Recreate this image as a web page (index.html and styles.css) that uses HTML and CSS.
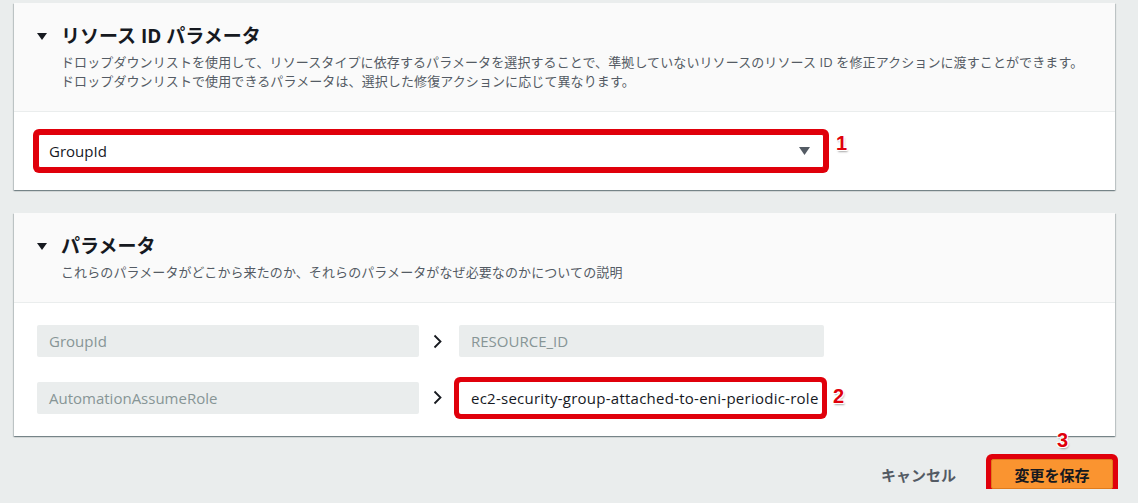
FILE: index.html
```html
<!DOCTYPE html>
<html lang="ja">
<head>
    <meta charset="UTF-8">
    <meta name="viewport" content="width=device-width, initial-scale=1.0">
    <title>修正アクション</title>
    <link rel="stylesheet" href="styles.css">
</head>
<body>
    <div class="page">
        <section class="card">
            <div class="card_head">
                <h2 class="card_title">
                    <svg class="toggle" width="10" height="7" viewBox="0 0 10 7"><path d="M0 0H10L5 7Z" fill="#16191f"/></svg>
                    リソース ID パラメータ
                </h2>
                <p class="card_desc">ドロップダウンリストを使用して、リソースタイプに依存するパラメータを選択することで、準拠していないリソースのリソース ID を修正アクションに渡すことができます。<br>ドロップダウンリストで使用できるパラメータは、選択した修復アクションに応じて異なります。</p>
            </div>
            <div class="card_body">
                <div class="mark_wrap">
                    <div class="select marked">
                        <span>GroupId</span>
                        <svg width="11" height="8" viewBox="0 0 11 8"><path d="M0 0H11L5.5 8Z" fill="#545b64"/></svg>
                    </div>
                    <span class="step step_1">1</span>
                </div>
            </div>
        </section>

        <section class="card">
            <div class="card_head">
                <h2 class="card_title">
                    <svg class="toggle" width="10" height="7" viewBox="0 0 10 7"><path d="M0 0H10L5 7Z" fill="#16191f"/></svg>
                    パラメータ
                </h2>
                <p class="card_desc">これらのパラメータがどこから来たのか、それらのパラメータがなぜ必要なのかについての説明</p>
            </div>
            <div class="card_body params">
                <div class="param_row">
                    <div class="box readonly">GroupId</div>
                    <svg class="arrow" width="9" height="15" viewBox="0 0 9 15"><path d="M1.5 1.5L7.5 7.5L1.5 13.5" fill="none" stroke="#16191f" stroke-width="1.8"/></svg>
                    <div class="box readonly">RESOURCE_ID</div>
                </div>
                <div class="param_row">
                    <div class="box readonly">AutomationAssumeRole</div>
                    <svg class="arrow" width="9" height="15" viewBox="0 0 9 15"><path d="M1.5 1.5L7.5 7.5L1.5 13.5" fill="none" stroke="#16191f" stroke-width="1.8"/></svg>
                    <div class="mark_wrap">
                        <div class="box input marked">ec2-security-group-attached-to-eni-periodic-role</div>
                        <span class="step step_2">2</span>
                    </div>
                </div>
            </div>
        </section>

        <div class="actions">
            <button class="btn_cancel">キャンセル</button>
            <div class="mark_wrap">
                <button class="btn_save marked">変更を保存</button>
                <span class="step step_3">3</span>
            </div>
        </div>
    </div>
</body>
</html>
```

FILE: styles.css
```css
* {margin: 0; padding: 0; box-sizing: border-box;}

body
{
    background: #eaeded;
    font-family: "Open Sans", "Noto Sans CJK JP", sans-serif;
    color: #16191f;
}

.page
{
    padding: 3px 23px 0 14px;
}

.card
{
    background: #fff;
    box-shadow: 0 1px 1px 0 rgba(0, 28, 36, .3), 1px 1px 1px 0 rgba(0, 28, 36, .15), -1px 1px 1px 0 rgba(0, 28, 36, .15);
    margin-bottom: 23px;
}

.card_head
{
    background: #fafafa;
    border-bottom: 1px solid #eaeded;
    padding: 21px 23px 20px;
}

.card_title
{
    display: flex;
    align-items: center;
    font-size: 19px;
    line-height: 24px;
    font-weight: 700;
}

.card_title .toggle
{
    margin-right: 14px;
}

.card_desc
{
    margin-top: 5px;
    padding-left: 24px;
    font-size: 13px;
    line-height: 19px;
    letter-spacing: .1px;
    color: #545b64;
}

.card_body
{
    padding: 22px 23px;
}

/* red highlight frames */
.marked
{
    box-shadow: 0 0 0 5px #e0000b;
    border-radius: 2px;
}

.mark_wrap
{
    position: relative;
    display: inline-block;
}

.step
{
    position: absolute;
    color: #e0000b;
    font-family: "Liberation Sans", sans-serif;
    font-weight: 700;
    font-size: 20px;
    line-height: 20px;
    text-shadow: 1px 1px 0 #fff, -1px -1px 0 #fff, 1px -1px 0 #fff, -1px 1px 0 #fff, 1px 2px 2px rgba(0, 0, 0, .35);
}

.step_1 { right: -23px; top: -1px; }
.step_2 { right: -22px; top: 5px; }
.step_3 { left: 66px; top: -29px; }

.select
{
    width: 786px;
    height: 34px;
    margin-left: 1px;
    background: #fff;
    border: 1px solid #e0000b;
    display: flex;
    align-items: center;
    justify-content: space-between;
    padding: 0 13px 0 10px;
    font-size: 15px;
}

.params
{
    display: flex;
    flex-direction: column;
    gap: 24px;
}

.param_row
{
    display: flex;
    align-items: center;
}

.box
{
    height: 32px;
    line-height: 32px;
    padding: 0 12px;
    font-size: 15px;
    border-radius: 2px;
    white-space: nowrap;
    overflow: hidden;
}

.readonly
{
    width: 382px;
    background: #eaeded;
    color: #879596;
}

.param_row .readonly:last-child
{
    width: 365px;
}

.arrow
{
    margin: 0 17px 0 14px;
}

.input
{
    width: 363px;
    background: #fff;
    color: #16191f;
    padding: 0 4px 0 12px;
    margin-top: 1px;
    letter-spacing: .25px;
}

.actions
{
    display: flex;
    justify-content: flex-end;
    align-items: center;
    padding-right: 2px;
}

.btn_cancel
{
    background: none;
    border: none;
    font-family: inherit;
    font-size: 15px;
    font-weight: 700;
    color: #545b64;
    margin-right: 35px;
}

.btn_save
{
    display: block;
    width: 122px;
    height: 30px;
    background: #fa9430;
    border: 1px solid #e07b1c;
    font-family: inherit;
    font-size: 15px;
    font-weight: 700;
    color: #16191f;
}
```
